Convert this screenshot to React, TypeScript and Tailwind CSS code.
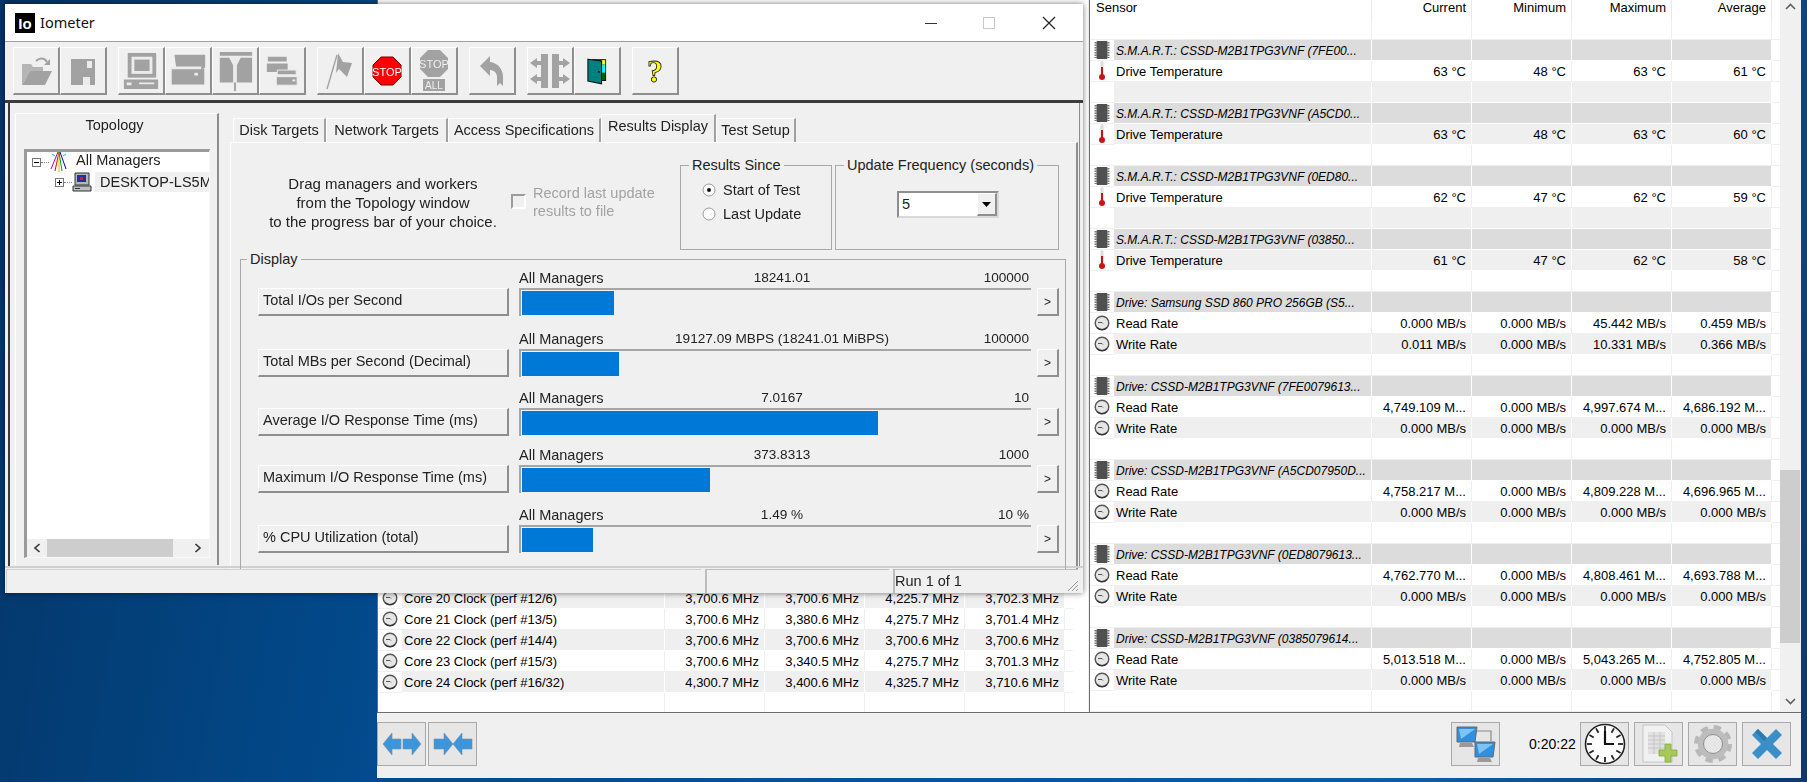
import type { ReactNode } from 'react';

const G = '#a2a2a2';
const TABLE_FONT = "font-['Liberation_Sans',Arial,sans-serif]";

function FolderIcon() {
  return (
    <svg width="34" height="34" viewBox="0 0 34 34">
      <path d="M3 10h9l2 3h10v4H11L3 31z" fill="#b5b5b5" />
      <path d="M11 17h22l-7 14H3z" fill={G} />
      <path d="M17 7c4-4 9-3 11 1" fill="none" stroke={G} strokeWidth="2" />
      <path d="M31 5v6h-6z" fill={G} />
    </svg>
  );
}

function FloppyIcon() {
  return (
    <svg width="30" height="34" viewBox="0 0 30 34">
      <path d="M3 5h24v26H3z" fill={G} />
      <path d="M19 7h5v7h-5zM15 23h7v8h-7z" fill="#ececec" />
    </svg>
  );
}

function ComputerIcon() {
  return (
    <svg width="38" height="40" viewBox="0 0 40 42">
      <path d="M6 2h30v26H6z" fill={G} />
      <path d="M10 6h22v18H10z" fill="#ececec" />
      <path d="M13 9h16v12H13z" fill={G} />
      <path d="M2 30h36v10H2z" fill={G} />
      <path d="M5 33h5v3H5zM18 33h16v2H18z" fill="#ececec" />
    </svg>
  );
}

function DiskIcon() {
  return (
    <svg width="38" height="38" viewBox="0 0 42 40">
      <path d="M6 2h34v14l-2 1H8z" fill={G} />
      <path d="M3 17h36v18H3z" fill={G} />
      <path d="M3 15h33l-1 3H3z" fill="#ececec" />
      <path d="M28 22h4v3h-4z" fill="#ececec" />
    </svg>
  );
}

function SplitIcon() {
  return (
    <svg width="38" height="40" viewBox="0 0 40 42">
      <path d="M4 1h34v32H4z" fill={G} />
      <path d="M1 5h38v2H26l-4 8v27h-4V15l-4-8H1z" fill="#ececec" />
      <path d="M19 33h2v9h-2z" fill={G} />
    </svg>
  );
}

function TwoDisksIcon() {
  return (
    <svg width="36" height="34" viewBox="0 0 38 36">
      <path d="M4 3h20v5H4zM3 10h22v9H3z" fill={G} />
      <path d="M14 17h20v5H14zM13 24h22v9H13z" fill="#a2a2a2" stroke="#ececec" strokeWidth="1" />
      <path d="M30 27h3v2h-3z" fill="#ececec" />
    </svg>
  );
}

function FlagIcon() {
  return (
    <svg width="30" height="40" viewBox="0 0 30 40">
      <path d="M13 2l5 9 9 1-5 14-8-8-3 4z" fill={G} />
      <path d="M12 4L2 38" stroke={G} strokeWidth="1.4" />
    </svg>
  );
}

function StopIcon() {
  return (
    <svg width="30" height="30" viewBox="0 0 30 30">
      <path d="M9 1h12l8 8v12l-8 8H9l-8-8V9z" fill="#f00" stroke="#700" strokeWidth="1" />
      <text x="15" y="19.5" textAnchor="middle" fontSize="11" fill="#fff" fontFamily="'Liberation Sans',sans-serif">STOP</text>
    </svg>
  );
}

function StopAllIcon() {
  return (
    <svg width="30" height="42" viewBox="0 0 30 42">
      <path d="M9 0h12l8 8v11l-8 8H9l-8-8V8z" fill={G} />
      <text x="15" y="18" textAnchor="middle" fontSize="11" fill="#eee" fontFamily="'Liberation Sans',sans-serif">STOP</text>
      <path d="M4 29h22v12H4z" fill={G} />
      <text x="15" y="39" textAnchor="middle" fontSize="10" fill="#eee" fontFamily="'Liberation Sans',sans-serif">ALL</text>
    </svg>
  );
}

function BackIcon() {
  return (
    <svg width="26" height="32" viewBox="0 0 26 32">
      <path d="M1 11L11 1v6c8 1 13 7 13 15v9l-3-3-3 3v-9c0-4-3-7-7-7v6z" fill={G} />
    </svg>
  );
}

function PiecesIcon() {
  return (
    <svg width="42" height="36" viewBox="0 0 42 36">
      <path d="M12 1h7v34h-7v-7H8v3L1 26l7-5v3h4v-12H8v3L1 10l7-5v3h4z" fill={G} />
      <path d="M23 1h7v7h4V5l7 5-7 5v-3h-4v12h4v-3l7 5-7 5v-3h-4v7h-7z" fill={G} />
    </svg>
  );
}

function DoorIcon() {
  return (
    <svg width="20" height="30" viewBox="0 0 22 30">
      <path d="M5 2h16v24H5z" fill="#111" />
      <path d="M16 3h4v5h-4z" fill="#ff0" />
      <path d="M16 8h4v9h-4z" fill="#0ff" />
      <path d="M16 17h4v8h-4z" fill="#060" />
      <path d="M1 2l15 2v25L1 26z" fill="#008080" stroke="#111" strokeWidth="1.2" />
      <path d="M12 15h2v2h-2z" fill="#111" />
    </svg>
  );
}

function HelpIcon() {
  return (
    <svg width="22" height="32" viewBox="0 0 20 30">
      <text x="10" y="25" textAnchor="middle" fontSize="30" fontWeight="700" fill="#ff0" stroke="#222" strokeWidth="0.8" fontFamily="'Liberation Serif',serif">?</text>
    </svg>
  );
}

function ToolButton({ children }: { children: ReactNode }) {
  return (
    <div className="flex h-[48px] w-[47px] items-center justify-center border-t border-l border-r-2 border-b-2 border-t-white border-l-white border-r-[#8e8e8e] border-b-[#8e8e8e]">
      {children}
    </div>
  );
}

function ChipIcon() {
  return (
    <svg width="16" height="20" viewBox="0 0 16 20">
      <path d="M1.5 2v16M14.5 2v16" stroke="#777" strokeWidth="2" strokeDasharray="1.5 1" />
      <rect x="2.5" y="1" width="11" height="18" rx="1" fill="#505050" />
    </svg>
  );
}

function ThermoIcon() {
  return (
    <svg width="10" height="20" viewBox="0 0 10 20">
      <rect x="3.5" y="0" width="3" height="14" rx="1.5" fill="#ddd" />
      <rect x="4" y="6" width="2" height="9" fill="#c81414" />
      <circle cx="5" cy="16" r="3" fill="#c81414" />
    </svg>
  );
}

function GaugeIcon() {
  return (
    <svg width="16" height="16" viewBox="0 0 16 16">
      <circle cx="8" cy="8" r="6.8" fill="#e6e6e6" stroke="#555" strokeWidth="1.4" />
      <path d="M4 7.5h4l1 1" fill="none" stroke="#555" strokeWidth="1" />
      <path d="M3 12.5a7 7 0 0 0 10 0" fill="none" stroke="#333" strokeWidth="1.2" />
    </svg>
  );
}

type RowKind = 'blank' | 'group' | 'temp' | 'rate' | 'clock';
type Row = { kind: RowKind; label?: string; values?: string[]; tint?: boolean };

function SensorRow({ row, labelWidth }: { row: Row; labelWidth: string }) {
  const shade =
    row.kind === 'group'
      ? 'bg-[#dcdcdc] border-white'
      : row.tint
        ? 'bg-[#efefef] border-white'
        : 'bg-white border-[#efefef]';
  const values = row.values ?? ['', '', '', ''];
  return (
    <div className="flex h-[21px] shrink-0 text-[13px] leading-[20px] text-black">
      <div className="flex w-[24px] items-center justify-center border-b border-[#efefef] bg-white">
        {row.kind === 'group' && <ChipIcon />}
        {row.kind === 'temp' && <ThermoIcon />}
        {(row.kind === 'rate' || row.kind === 'clock') && <GaugeIcon />}
      </div>
      <div className={`${labelWidth} overflow-hidden whitespace-nowrap border-r border-b pl-[2px] pt-px ${shade} ${row.kind === 'group' ? 'text-[12px] italic' : ''}`}>
        {row.label}
      </div>
      {values.map((v, i) => (
        <div key={i} className={`w-[100px] border-r border-b pr-[5px] pt-px text-right ${shade}`}>
          {v}
        </div>
      ))}
      <div className="w-[8px] border-b border-[#efefef] bg-white" />
    </div>
  );
}

const smart = (id: string, a: string, b: string, c: string, d: string, first: boolean): Row[] => [
  { kind: 'group', label: `S.M.A.R.T.: CSSD-M2B1TPG3VNF (${id}...` },
  { kind: 'temp', label: 'Drive Temperature', values: [a, b, c, d], tint: !first },
  { kind: 'blank', tint: first },
];

const drive = (name: string, read: string[], write: string[]): Row[] => [
  { kind: 'group', label: `Drive: ${name}...` },
  { kind: 'rate', label: 'Read Rate', values: read },
  { kind: 'rate', label: 'Write Rate', values: write, tint: true },
  { kind: 'blank' },
];

const zero = '0.000 MB/s';
const zeros = [zero, zero, zero, zero];

const rightRows: Row[] = [
  { kind: 'blank' },
  ...smart('7FE00', '63 °C', '48 °C', '63 °C', '61 °C', true),
  ...smart('A5CD0', '63 °C', '48 °C', '63 °C', '60 °C', false),
  ...smart('0ED80', '62 °C', '47 °C', '62 °C', '59 °C', true),
  ...smart('03850', '61 °C', '47 °C', '62 °C', '58 °C', false),
  ...drive('Samsung SSD 860 PRO 256GB (S5', [zero, zero, '45.442 MB/s', '0.459 MB/s'], ['0.011 MB/s', zero, '10.331 MB/s', '0.366 MB/s']),
  ...drive('CSSD-M2B1TPG3VNF (7FE0079613', ['4,749.109 M...', zero, '4,997.674 M...', '4,686.192 M...'], zeros),
  ...drive('CSSD-M2B1TPG3VNF (A5CD07950D', ['4,758.217 M...', zero, '4,809.228 M...', '4,696.965 M...'], zeros),
  ...drive('CSSD-M2B1TPG3VNF (0ED8079613', ['4,762.770 M...', zero, '4,808.461 M...', '4,693.788 M...'], zeros),
  ...drive('CSSD-M2B1TPG3VNF (0385079614', ['5,013.518 M...', zero, '5,043.265 M...', '4,752.805 M...'], zeros),
];

const coreRows: Row[] = [
  { kind: 'clock', label: 'Core 20 Clock (perf #12/6)', values: ['3,700.6 MHz', '3,700.6 MHz', '4,225.7 MHz', '3,702.3 MHz'], tint: true },
  { kind: 'clock', label: 'Core 21 Clock (perf #13/5)', values: ['3,700.6 MHz', '3,380.6 MHz', '4,275.7 MHz', '3,701.4 MHz'] },
  { kind: 'clock', label: 'Core 22 Clock (perf #14/4)', values: ['3,700.6 MHz', '3,700.6 MHz', '3,700.6 MHz', '3,700.6 MHz'], tint: true },
  { kind: 'clock', label: 'Core 23 Clock (perf #15/3)', values: ['3,700.6 MHz', '3,340.5 MHz', '4,275.7 MHz', '3,701.3 MHz'] },
  { kind: 'clock', label: 'Core 24 Clock (perf #16/32)', values: ['4,300.7 MHz', '3,400.6 MHz', '4,325.7 MHz', '3,710.6 MHz'], tint: true },
  { kind: 'blank' },
];

const headers = ['Current', 'Minimum', 'Maximum', 'Average'];

function ArrowsIcon({ inward }: { inward?: boolean }) {
  return (
    <svg width="40" height="28" viewBox="0 0 40 28">
      {inward ? (
        <>
          <path d="M1 9h10V3l9 11-9 11v-6H1z" fill="#3c96dc" stroke="#7d8ea0" strokeWidth="0.6" />
          <path d="M39 9H29V3l-9 11 9 11v-6h10z" fill="#3c96dc" stroke="#7d8ea0" strokeWidth="0.6" />
        </>
      ) : (
        <>
          <path d="M19 9H10V3L1 14l9 11v-6h9z" fill="#3c96dc" stroke="#7d8ea0" strokeWidth="0.6" />
          <path d="M21 9h9V3l9 11-9 11v-6h-9z" fill="#3c96dc" stroke="#7d8ea0" strokeWidth="0.6" />
        </>
      )}
    </svg>
  );
}

function NetworkIcon() {
  return (
    <svg width="42" height="38" viewBox="0 0 42 38">
      <path d="M22 6h14v10" fill="none" stroke="#888" strokeWidth="1.2" />
      <path d="M2 2h20l-2 15H2z" fill="#2f8fe0" stroke="#666" strokeWidth="1" />
      <path d="M4 4h16L6 14z" fill="#7cc4f5" />
      <path d="M5 18h12l2 4H4z" fill="#999" />
      <path d="M20 17h20l-2 15H20z" fill="#2f8fe0" stroke="#666" strokeWidth="1" />
      <path d="M22 19h16L24 29z" fill="#7cc4f5" />
      <path d="M23 33h12l2 4H22z" fill="#999" />
    </svg>
  );
}

function ClockIcon() {
  const ticks = [0, 30, 60, 90, 120, 150, 180, 210, 240, 270, 300, 330];
  return (
    <svg width="42" height="42" viewBox="0 0 42 42">
      <circle cx="21" cy="21" r="19.5" fill="#fff" stroke="#222" strokeWidth="1.6" />
      {ticks.map(t => (
        <path key={t} d="M21 3v5" stroke="#222" strokeWidth="1.8" transform={`rotate(${t} 21 21)`} />
      ))}
      <path d="M21 8v13h9" fill="none" stroke="#111" strokeWidth="2.2" />
    </svg>
  );
}

function SheetIcon() {
  return (
    <svg width="38" height="40" viewBox="0 0 38 40">
      <path d="M3 1h22l7 7v30H3z" fill="#f1f1f1" stroke="#c4c4c4" />
      <path d="M8 8h17v22H8z" fill="#e2e2e2" />
      <path d="M8 12h17M8 16h17M8 20h17M8 24h17M14 8v22M20 8v22" stroke="#c0c0c0" strokeWidth="0.8" />
      <path d="M25 20h6v6h6v6h-6v6h-6v-6h-6v-6h6z" fill="#a6c95a" stroke="#86a840" strokeWidth="0.8" />
    </svg>
  );
}

function GearIcon() {
  return (
    <svg width="40" height="40" viewBox="0 0 40 40">
      <circle cx="20" cy="20" r="16" fill="none" stroke="#b8b8b8" strokeWidth="6" strokeDasharray="7 5.6" />
      <circle cx="20" cy="20" r="12.5" fill="none" stroke="#bdbdbd" strokeWidth="5.5" />
      <circle cx="20" cy="20" r="9.5" fill="none" stroke="#8c8c8c" strokeWidth="1" />
    </svg>
  );
}

function CloseIcon() {
  return (
    <svg width="32" height="32" viewBox="0 0 32 32">
      <path d="M7 1l9 9 9-9 6 6-9 9 9 9-6 6-9-9-9 9-6-6 9-9-9-9z" fill="#3b8fc9" />
      <path d="M7 1l9 9-3 3-9-9z" fill="#2f78b0" />
    </svg>
  );
}

function IconButton({ children }: { children: ReactNode }) {
  return (
    <div className="flex h-[44px] w-[49px] items-center justify-center border border-[#a9a9a9] bg-[#e6e6e6]">
      {children}
    </div>
  );
}

function ManagersIcon() {
  return (
    <svg width="20" height="22" viewBox="0 0 20 22">
      <path d="M9 1L2 18" stroke="#b000b0" strokeWidth="1" />
      <path d="M10 1L6 20" stroke="#e00000" strokeWidth="1" />
      <path d="M10 1v20" stroke="#e0c000" strokeWidth="1" />
      <path d="M10 1l3 19" stroke="#00a000" strokeWidth="1" />
      <path d="M11 1l6 17" stroke="#0000c0" strokeWidth="1" />
      <path d="M3 3l3 2M17 3l-3 2" stroke="#00c0e0" strokeWidth="1" />
    </svg>
  );
}

function PcIcon() {
  return (
    <svg width="20" height="20" viewBox="0 0 20 20">
      <path d="M3 1h14v12H3z" fill="#aeb8b8" stroke="#333" />
      <path d="M5 3h9v7H5z" fill="#2030a0" />
      <path d="M8 5h3v3H8z" fill="#d02020" />
      <path d="M1 14h18v5H1z" fill="#b8c0c0" stroke="#333" />
      <path d="M3 16h5v1H3z" fill="#333" />
    </svg>
  );
}

function TreeBox({ minus }: { minus?: boolean }) {
  return (
    <div className="relative h-[9px] w-[9px] shrink-0 border border-[#777] bg-white">
      <div className="absolute left-[1px] top-[3px] h-px w-[5px] bg-black" />
      {!minus && <div className="absolute left-[3px] top-[1px] h-[5px] w-px bg-black" />}
    </div>
  );
}

function Radio({ on }: { on?: boolean }) {
  return (
    <svg width="14" height="14" viewBox="0 0 14 14">
      <circle cx="7" cy="7" r="6" fill="#fff" stroke="#9a9a9a" strokeWidth="1" />
      {on && <circle cx="7" cy="7" r="2" fill="#111" />}
    </svg>
  );
}

type Meter = { label: string; value: string; max: string; fill: string; top: string };

const meters: Meter[] = [
  { label: 'Total I/Os per Second', value: '18241.01', max: '100000', fill: 'w-[92px]', top: 'mt-0' },
  { label: 'Total MBs per Second (Decimal)', value: '19127.09 MBPS (18241.01 MiBPS)', max: '100000', fill: 'w-[97px]', top: 'mt-[15px]' },
  { label: 'Average I/O Response Time (ms)', value: '7.0167', max: '10', fill: 'w-[356px]', top: 'mt-[13px]' },
  { label: 'Maximum I/O Response Time (ms)', value: '373.8313', max: '1000', fill: 'w-[188px]', top: 'mt-[11px]' },
  { label: '% CPU Utilization (total)', value: '1.49 %', max: '10 %', fill: 'w-[71px]', top: 'mt-[14px]' },
];

const bevel = 'border-t border-l border-r-2 border-b-2 border-t-white border-l-white border-r-[#8e8e8e] border-b-[#8e8e8e]';

function MeterRow({ m }: { m: Meter }) {
  return (
    <div className={`flex items-end ${m.top}`}>
      <div className={`flex h-[28px] w-[251px] items-center pb-[2px] pl-[4px] ${bevel}`}>{m.label}</div>
      <div className="ml-[10px] w-[512px]">
        <div className="grid h-[18px] grid-cols-[120px_1fr_106px] leading-[16px]">
          <span>All Managers</span>
          <span className="whitespace-nowrap text-center text-[13.6px]">{m.value}</span>
          <span className="pr-[2px] text-right text-[13.6px]">{m.max}</span>
        </div>
        <div className="h-[28px] border-t-2 border-l-2 border-[#a6a6a6] border-r-white border-b-white p-px">
          <div className={`h-full bg-[#0078d7] ${m.fill}`} />
        </div>
      </div>
      <div className={`ml-[6px] flex h-[28px] w-[22px] items-center justify-center text-[12px] ${bevel}`}>&gt;</div>
    </div>
  );
}

function Tab({ label, width, active }: { label: string; width: string; active?: boolean }) {
  return (
    <div
      className={`${width} flex items-center justify-center whitespace-nowrap border-t border-l border-r-2 border-t-white border-l-white border-r-[#a0a0a0] ${
        active ? 'h-[28px] pb-[3px]' : 'h-[24px]'
      }`}
    >
      {label}
    </div>
  );
}

function Legend({ children, left }: { children: ReactNode; left: string }) {
  return <div className={`absolute -top-[10px] ${left} bg-[#f0f0f0] px-[3px] leading-[18px]`}>{children}</div>;
}

function IometerWindow() {
  return (
    <div className="absolute left-[5px] top-[4px] flex h-[589px] w-[1078px] flex-col overflow-hidden bg-[#f0f0f0] font-['Liberation_Sans',Arial,sans-serif] text-[14.5px] text-[#222] shadow-[0_0_6px_rgba(0,0,0,0.55)] blur-[0.3px]">
      <div className="flex h-[38px] shrink-0 items-center justify-between border-b border-[#a0a0a0] bg-white pt-px">
        <div className="flex items-center">
          <div className="ml-[10px] flex h-[20px] w-[20px] items-center justify-center bg-black text-[15px] font-bold leading-none text-white">
            Io
          </div>
          <span className="ml-[5px] font-['Noto_Sans',sans-serif] text-[14.5px] text-[#111]">Iometer</span>
        </div>
        <div className="flex items-center text-[#222]">
          <div className="h-px w-[12px] bg-[#333]" />
          <div className="ml-[46px] h-[12px] w-[12px] border border-[#c8c8c8]" />
          <svg className="ml-[47px] mr-[27px]" width="14" height="14" viewBox="0 0 14 14">
            <path d="M1 1l12 12M13 1L1 13" stroke="#222" strokeWidth="1.2" />
          </svg>
        </div>
      </div>

      <div className="flex h-[58px] shrink-0 gap-[11px] pl-[8px] pt-[5px]">
        <div className="flex">
          <ToolButton><FolderIcon /></ToolButton>
          <ToolButton><FloppyIcon /></ToolButton>
        </div>
        <div className="flex">
          <ToolButton><ComputerIcon /></ToolButton>
          <ToolButton><DiskIcon /></ToolButton>
          <ToolButton><SplitIcon /></ToolButton>
          <ToolButton><TwoDisksIcon /></ToolButton>
        </div>
        <div className="flex">
          <ToolButton><FlagIcon /></ToolButton>
          <ToolButton><StopIcon /></ToolButton>
          <ToolButton><StopAllIcon /></ToolButton>
        </div>
        <ToolButton><BackIcon /></ToolButton>
        <div className="flex">
          <ToolButton><PiecesIcon /></ToolButton>
          <ToolButton><DoorIcon /></ToolButton>
        </div>
        <ToolButton><HelpIcon /></ToolButton>
      </div>

      <div className="h-[466px] shrink-0 border-t-[3px] border-[#3c3c3c] pl-[3px] pr-[3px]">
        <div className="flex h-full border-l-2 border-r border-l-[#3c3c3c] border-r-[#8c8c8c]">
          <div className="ml-[5px] mt-[10px] flex h-[452px] w-[204px] shrink-0 flex-col border-t border-l border-r-2 border-t-white border-l-white border-r-[#8e8e8e]">
            <div className="h-[35px] pr-[4px] pt-px text-center leading-[20px]">Topology</div>
            <div className="ml-[8px] flex h-[409px] w-[186px] flex-col border-t-[3px] border-l-[3px] border-r-[1px] border-b border-[#9a9a9a] border-r-[#f8f8f8] border-b-[#f8f8f8] bg-white">
              <div className="flex-1 overflow-hidden">
                <div className="flex h-[20px] items-center pl-[5px]">
                  <TreeBox minus />
                  <div className="w-[8px] border-t border-dotted border-[#888]" />
                  <ManagersIcon />
                  <span className="-mt-[2px] ml-[7px] whitespace-nowrap">All Managers</span>
                </div>
                <div className="flex h-[20px] items-center pl-[28px]">
                  <TreeBox />
                  <div className="w-[8px] border-t border-dotted border-[#888]" />
                  <PcIcon />
                  <span className="ml-[3px] h-[20px] flex-1 overflow-hidden whitespace-nowrap bg-[#f0f0f0] pl-[5px] leading-[20px]">
                    DESKTOP-LS5MC
                  </span>
                </div>
              </div>
              <div className="flex h-[18px] shrink-0 items-center bg-[#f0f0f0]">
                <svg className="mx-[6px]" width="8" height="10" viewBox="0 0 8 10"><path d="M6.5 1L2 5l4.5 4" fill="none" stroke="#333" strokeWidth="1.6" /></svg>
                <div className="h-[18px] w-[126px] bg-[#cdcdcd]" />
                <svg className="ml-[21px]" width="8" height="10" viewBox="0 0 8 10"><path d="M1.5 1L6 5 1.5 9" fill="none" stroke="#333" strokeWidth="1.6" /></svg>
              </div>
            </div>
          </div>

          <div className="ml-[11px] mt-[11px] flex w-[848px] flex-col">
            <div className="flex h-[28px] shrink-0 items-end pl-[3px]">
              <Tab label="Disk Targets" width="w-[93px]" />
              <Tab label="Network Targets" width="w-[122px]" />
              <Tab label="Access Specifications" width="w-[153px]" />
              <Tab label="Results Display" width="w-[115px]" active />
              <Tab label="Test Setup" width="w-[80px]" />
            </div>
            <div className="flex-1 border-l border-t border-r-2 border-t-white border-l-white border-r-[#8e8e8e]">
              <div className="flex h-[116px]">
                <div className="ml-[29px] w-[246px] whitespace-nowrap pt-[31px] text-center text-[15px] leading-[19px]">
                  Drag managers and workers<br />from the Topology window<br />to the progress bar of your choice.
                </div>
                <div className="ml-[5px] mt-[51px] h-[15px] w-[15px] border-2 border-[#9c9c9c] border-r-white border-b-white" />
                <div className="ml-[7px] w-[147px] pt-[41px] leading-[18px] text-[#a2a2a2]">
                  Record last update<br />results to file
                </div>
                <div className="relative mt-[22px] h-[85px] w-[152px] border border-[#a9a9a9]">
                  <Legend left="left-[8px]">Results Since</Legend>
                  <div className="flex items-center pl-[21px] pt-[15px]">
                    <Radio on /><span className="ml-[7px] leading-[18px]">Start of Test</span>
                  </div>
                  <div className="flex items-center pl-[21px] pt-[6px]">
                    <Radio /><span className="ml-[7px] leading-[18px]">Last Update</span>
                  </div>
                </div>
                <div className="relative ml-[3px] mt-[22px] h-[85px] w-[224px] border border-[#a9a9a9]">
                  <Legend left="left-[8px]">Update Frequency (seconds)</Legend>
                  <div className="ml-[61px] mt-[25px] flex h-[27px] w-[102px] items-stretch border-2 border-[#8e8e8e] border-r-[#d8d8d8] border-b-[#d8d8d8] bg-white">
                    <span className="flex-1 pl-[3px] leading-[22px]">5</span>
                    <div className={`flex w-[20px] items-center justify-center bg-[#f0f0f0] ${bevel}`}>
                      <svg width="9" height="5" viewBox="0 0 9 5"><path d="M0 0h9L4.5 5z" fill="#000" /></svg>
                    </div>
                  </div>
                </div>
              </div>
              <div className="relative ml-[9px] h-[310px] w-[826px] border-x border-t border-[#a9a9a9] pl-[17px] pt-[10px]">
                <Legend left="left-[6px]">Display</Legend>
                {meters.map(m => (
                  <MeterRow key={m.label} m={m} />
                ))}
              </div>
            </div>
          </div>
        </div>
      </div>

      <div className="flex flex-1 border-t-2 border-[#d0d0d0] pl-[1px] pt-[1px]">
        <div className="w-[695px] border-l border-t border-[#d0d0d0]" />
        <div className="ml-[4px] w-[184px] border-l-2 border-t border-[#bdbdbd]" />
        <div className="relative ml-[4px] w-[185px] border-l-2 border-t border-[#bdbdbd] leading-[22px]">
          Run 1 of 1
          <svg className="absolute bottom-[1px] right-[-1px]" width="14" height="14" viewBox="0 0 14 14">
            <path d="M13 3L3 13M13 7l-6 6M13 11l-2 2" stroke="#9a9a9a" strokeWidth="1" />
          </svg>
        </div>
      </div>
    </div>
  );
}

function HwinfoWindow() {
  return (
    <div className={`absolute left-[377px] top-0 flex h-[778px] w-[1424px] flex-col bg-[#f0f0f0] ${TABLE_FONT}`}>
      <div className="flex h-[713px] shrink-0 border-b border-[#6e6e6e]">
        <div className="flex w-[711px] shrink-0 flex-col justify-end overflow-hidden border-l border-[#6e6e6e] bg-white">
          <div className="-mb-[2px]">
            {coreRows.map((r, i) => (
              <SensorRow key={i} row={r} labelWidth="w-[263px]" />
            ))}
          </div>
        </div>
        <div className="ml-[1px] flex w-[691px] shrink-0 flex-col overflow-hidden border-l border-[#6e6e6e] bg-white">
          <div className="flex h-[19px] shrink-0 text-[13px] leading-[16px] text-black">
            <div className="w-[282px] border-r border-[#e8e8e8] pl-[6px]">Sensor</div>
            {headers.map(h => (
              <div key={h} className="w-[100px] border-r border-[#e8e8e8] pr-[5px] text-right">{h}</div>
            ))}
          </div>
          {rightRows.map((r, i) => (
            <SensorRow key={i} row={r} labelWidth="w-[258px]" />
          ))}
        </div>
        <div className="relative w-[21px] shrink-0 bg-[#f0f0f0]">
          <svg className="absolute left-[5px] top-[3px]" width="11" height="7" viewBox="0 0 11 7"><path d="M1 6l4.5-4.5L10 6" fill="none" stroke="#606060" strokeWidth="1.6" /></svg>
          <div className="absolute left-0 top-[470px] h-[173px] w-[20px] bg-[#cdcdcd]" />
          <svg className="absolute left-[5px] top-[698px]" width="11" height="7" viewBox="0 0 11 7"><path d="M1 1l4.5 4.5L10 1" fill="none" stroke="#606060" strokeWidth="1.6" /></svg>
        </div>
      </div>
      <div className="flex flex-1 items-start pt-[9px] text-[13px] text-black">
        <div className="ml-0 flex gap-[2px]">
          <IconButton><ArrowsIcon /></IconButton>
          <IconButton><ArrowsIcon inward /></IconButton>
        </div>
        <div className="ml-[974px]">
          <IconButton><NetworkIcon /></IconButton>
        </div>
        <div className="ml-[29px] w-[51px] text-[14px] leading-[44px]">0:20:22</div>
        <div className="flex gap-[5px]">
          <IconButton><ClockIcon /></IconButton>
          <IconButton><SheetIcon /></IconButton>
          <IconButton><GearIcon /></IconButton>
          <IconButton><CloseIcon /></IconButton>
        </div>
      </div>
    </div>
  );
}

export default function App() {
  return (
    <div className="relative h-[782px] w-[1807px] overflow-hidden bg-[linear-gradient(100deg,#043566_0%,#024a8c_25%,#0058a6_60%,#0a5ea8_80%,#0c3a6c_100%)]">
      <HwinfoWindow />
      <IometerWindow />
    </div>
  );
}
